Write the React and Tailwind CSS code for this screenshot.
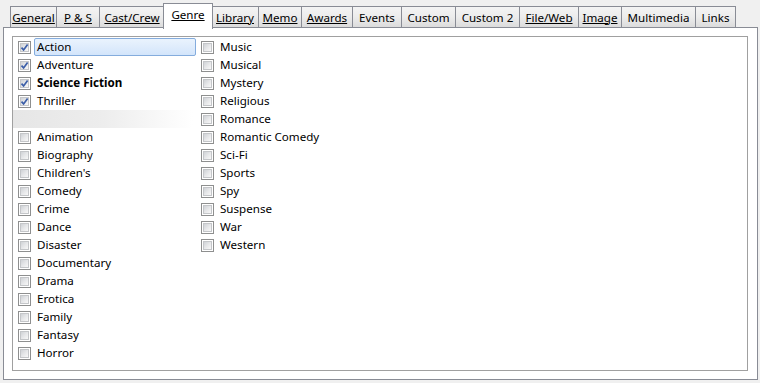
import React from "react";

const tabs = [
  { label: "General", w: 47, u: true },
  { label: "P & S", w: 44, u: true },
  { label: "Cast/Crew", w: 66, u: true },
  { label: "Genre", w: 48, u: true, sel: true },
  { label: "Library", w: 48, u: true },
  { label: "Memo", w: 44, u: true },
  { label: "Awards", w: 52, u: true },
  { label: "Events", w: 50, u: false },
  { label: "Custom", w: 55, u: false },
  { label: "Custom 2", w: 65, u: false },
  { label: "File/Web", w: 60, u: true },
  { label: "Image", w: 44, u: true },
  { label: "Multimedia", w: 75, u: false },
  { label: "Links", w: 41, u: false },
];

const col1 = [
  { label: "Action", checked: true, selected: true },
  { label: "Adventure", checked: true },
  { label: "Science Fiction", checked: true, bold: true },
  { label: "Thriller", checked: true },
  { blank: true },
  { label: "Animation" },
  { label: "Biography" },
  { label: "Children's" },
  { label: "Comedy" },
  { label: "Crime" },
  { label: "Dance" },
  { label: "Disaster" },
  { label: "Documentary" },
  { label: "Drama" },
  { label: "Erotica" },
  { label: "Family" },
  { label: "Fantasy" },
  { label: "Horror" },
];

const col2 = [
  { label: "Music" },
  { label: "Musical" },
  { label: "Mystery" },
  { label: "Religious" },
  { label: "Romance" },
  { label: "Romantic Comedy" },
  { label: "Sci-Fi" },
  { label: "Sports" },
  { label: "Spy" },
  { label: "Suspense" },
  { label: "War" },
  { label: "Western" },
];

function Check({ checked }) {
  return (
    <div className="w-[13px] h-[13px] border border-[#8e8f8f] bg-white p-[1px] shrink-0">
      <div className="w-full h-full bg-gradient-to-br from-[#cfd2d6] via-[#e6e7e9] to-[#f8f8f8] border border-[#c4c6c9] relative">
        {checked && (
          <svg viewBox="0 0 9 9" className="absolute -left-[1px] -top-[1px] w-[9px] h-[9px]">
            <path d="M1.5 4.6 L3.6 6.9 L7.6 1.6" fill="none" stroke="#3b5ea8" strokeWidth="1.7" />
          </svg>
        )}
      </div>
    </div>
  );
}

function Row({ item }) {
  if (item.blank) {
    return (
      <div className="h-[18px] -ml-[3px] w-[180px] bg-gradient-to-r from-[#e6e6e6] via-[#ededed] to-white" />
    );
  }
  return (
    <div className="h-[18px] flex items-center">
      <div className="ml-[2px]">
        <Check checked={item.checked} />
      </div>
      <div
        className={
          "ml-[3px] h-[18px] flex items-center pl-[2px] pr-[3px] border rounded-[2px] " +
          (item.selected
            ? "w-[162px] border-[#84acdd] bg-gradient-to-b from-[#eaf3fd] to-[#d3e5fb]"
            : "border-transparent")
        }
      >
        <span className={"leading-[16px] " + (item.bold ? "font-bold" : "")}>{item.label}</span>
      </div>
    </div>
  );
}

export default function App() {
  return (
    <div
      className="w-[760px] h-[383px] bg-[#f0f0f0] text-[11.6px] text-black overflow-hidden"
      style={{ fontFamily: '"Noto Sans", "Open Sans", sans-serif' }}
    >
      <div className="h-[27px] flex items-end pl-[10px]">
        {tabs.map((t, i) =>
          t.sel ? (
            <div
              key={i}
              className="relative z-10 -mb-[2px] -ml-[2px] -mr-[1px] h-[26px] bg-white border border-b-0 border-[#898c95] flex items-start justify-center pt-[2px]"
              style={{ width: t.w + 2 }}
            >
              <span className="underline leading-[18px]">{t.label}</span>
            </div>
          ) : (
            <div
              key={i}
              className={
                "h-[21px] border border-b-0 border-[#898c95] bg-gradient-to-b from-[#f4f4f4] via-[#ececec] to-[#dcdcdc] flex items-center justify-center pt-[1px] " +
                (i > 0 ? "-ml-[1px]" : "")
              }
              style={{ width: t.w }}
            >
              <span className={"leading-[18px] " + (t.u ? "underline" : "")}>{t.label}</span>
            </div>
          )
        )}
      </div>
      <div className="ml-[3px] w-[755px] h-[353px] border border-[#898c95] bg-white p-[8px]">
        <div className="w-[736px] h-[335px] border border-[#a0a0a0] bg-white pt-[1px] pl-[3px] flex">
          <div className="w-[183px]">
            {col1.map((it, i) => (
              <Row key={i} item={it} />
            ))}
          </div>
          <div className="w-[183px]">
            {col2.map((it, i) => (
              <Row key={i} item={it} />
            ))}
          </div>
        </div>
      </div>
    </div>
  );
}
